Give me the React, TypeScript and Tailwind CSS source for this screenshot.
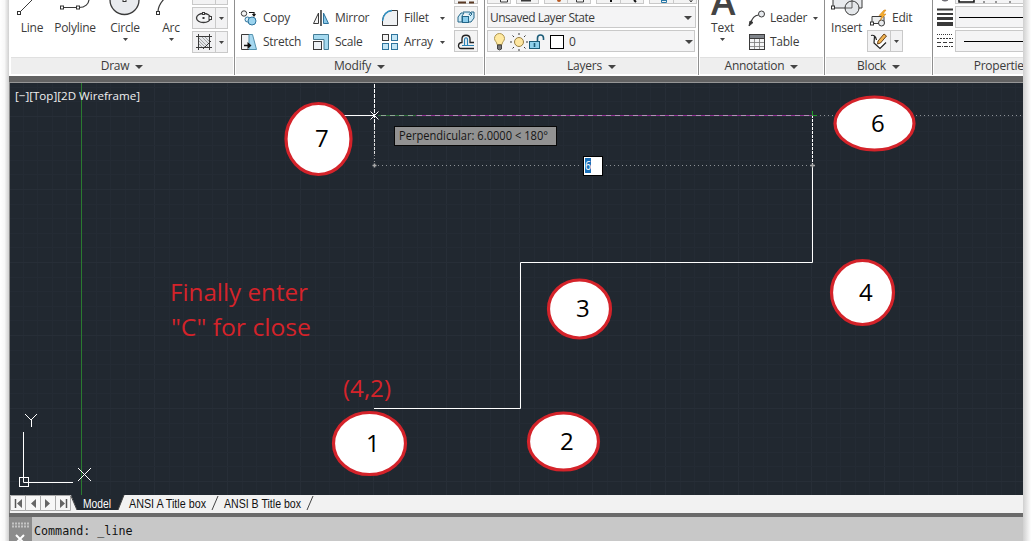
import React from "react";

type IconProps = { children?: React.ReactNode; w?: number; h?: number; className?: string };

function Icon({ children, w = 18, h = 18, className = "" }: IconProps) {
  return (
    <svg width={w} height={h} viewBox={`0 0 ${w} ${h}`} fill="none" stroke="#3a3a3a" strokeWidth="1" className={`block shrink-0 ${className}`}>
      {children}
    </svg>
  );
}

function Caret({ className = "" }: { className?: string }) {
  return (
    <svg width="5" height="3" viewBox="0 0 5 3" className={`block shrink-0 ${className}`}>
      <path d="M0 0h5L2.5 3z" fill="#444" />
    </svg>
  );
}

function BigCaret({ className = "" }: { className?: string }) {
  return (
    <svg width="8" height="4" viewBox="0 0 8 4" className={`block shrink-0 ${className}`}>
      <path d="M0 0h8L4 4z" fill="#444" />
    </svg>
  );
}

function Panel({ title, width, children, caret = true }: { title: string; width: string; children: React.ReactNode; caret?: boolean }) {
  return (
    <section className={`flex h-[75px] shrink-0 flex-col border-r border-[#8f8f8f] px-px ${width}`}>
      <div className="flex h-[57px] w-full overflow-hidden">{children}</div>
      <div className="flex h-[17px] items-center justify-center gap-[6px] border-t border-[#e0e0e0] bg-[#eeeeee] text-[12px] whitespace-nowrap">
        <span>{title}</span>
        {caret && <BigCaret className="mt-px" />}
      </div>
    </section>
  );
}

function Big({ icon, label, width, caret }: { icon: React.ReactNode; label: string; width: string; caret?: boolean }) {
  return (
    <div className={`flex shrink-0 flex-col items-center ${width}`}>
      <div className="flex h-[19px] items-start">{icon}</div>
      <span className="h-[18px] text-[12px] leading-[18px]">{label}</span>
      {caret && <Caret className="mt-px" />}
    </div>
  );
}

function Small({ icon, label, width, caret, labelGap = "ml-[5px]", caretGap = "mr-[9px]" }: { icon: React.ReactNode; label: string; width: string; caret?: boolean; labelGap?: string; caretGap?: string }) {
  return (
    <div className={`flex h-6 shrink-0 items-center ${width}`}>
      {icon}
      <span className={`grow text-[12px] whitespace-nowrap ${labelGap}`}>{label}</span>
      {caret && <Caret className={caretGap} />}
    </div>
  );
}

function Split({ icon }: { icon: React.ReactNode }) {
  return (
    <div className="flex h-[22px] w-9 border border-[#c9c9c9] bg-[#f2f2f3]">
      <div className="flex w-[23px] items-center justify-center border-r border-[#c9c9c9]">{icon}</div>
      <div className="flex grow items-center justify-center">
        <Caret />
      </div>
    </div>
  );
}

const Sq = ({ x, y }: { x: number; y: number }) => <rect x={x} y={y} width="3" height="3" fill="#fff" stroke="#333" />;

function Ribbon() {
  return (
    <header className="flex h-[76px] overflow-hidden bg-white pl-px text-[#3b3b3b]">
      <Panel title="Draw" width="w-[225px]">
        <div className="flex pl-[1px]">
          <Big width="w-10" label="Line" icon={<Icon w={40} h={19}><path d="M8 12L22-2" /><Sq x={5.5} y={11.5} /></Icon>} />
          <Big width="w-[46px]" label="Polyline" icon={<Icon w={46} h={19}><path d="M9 7.5H27C33 7.5 37 4 37-1" strokeWidth="1.2" /><Sq x={8.5} y={6} /><Sq x={24.5} y={6} /></Icon>} />
          <Big width="w-[54px]" label="Circle" caret icon={<Icon w={54} h={19}><circle cx="26.500" cy="0" r="14.500" fill="#e9ebee" strokeWidth="1.300" /><Sq x={25} y={-1.5} /></Icon>} />
          <Big width="w-[38px]" label="Arc" caret icon={<Icon w={38} h={19}><path d="M6 12C6 7 9 2 13-2" strokeWidth="1.200" /><Sq x={4.5} y={11.5} /></Icon>} />
        </div>
        <div className="-mt-[17px] flex flex-col gap-[2px] pl-[2px]">
          <Split icon={<Icon />} />
          <Split icon={<Icon><ellipse cx="8.500" cy="9" rx="7" ry="4.500" strokeWidth="1.300" fill="#f4f5f6" /><rect x="7.500" y="8" width="2" height="2" fill="#333" stroke="none" /><rect x="14" y="7.500" width="2.500" height="3" fill="#fff" /><rect x="7.500" y="3.500" width="2" height="2" fill="#fff" /></Icon>} />
          <Split icon={<Icon><rect x="3.500" y="3.500" width="11" height="11" fill="#e4e7ea" stroke="none" /><path d="M4 5l9 9M4 8l6 6M4 11l3 3M7 4l7 7M10 4l4 4" stroke="#888" strokeWidth=".7" /><path d="M1 3.500H17M1 14.500H17M3.500 1V17M14.500 1V17M8 16l8-8" /></Icon>} />
        </div>
      </Panel>

      <Panel title="Modify" width="w-[250px]">
        <div className="mt-[6px] flex pl-[4px]">
          <div className="w-[72px]">
            <Small width="w-full" label="Copy" icon={<Icon><circle cx="4" cy="4.500" r="2.700" fill="#f4f4f4" /><path d="M9 3.500h5v3M12.500 5l1.500 2 1.500-2" strokeWidth="1.200" stroke="#111" /><circle cx="7.500" cy="10.500" r="2.500" fill="#d8edf8" stroke="#2d739c" /><circle cx="12" cy="12" r="4" fill="#9bd3ee" stroke="#2d739c" /></Icon>} />
            <Small width="w-full" label="Stretch" icon={<Icon><path d="M9 1.500H1.500V16.500H9" fill="#f1f3f5" /><path d="M9 1.500H12.500L16.500 16.500H9z" fill="#a6d8f0" stroke="#5391ad" /><path d="M4 12.500h5" stroke="#111" strokeWidth="1.500" /><path d="M7.500 9l4 3.500-4 3.500z" fill="#111" stroke="none" /></Icon>} />
          </div>
          <div className="w-[69px]">
            <Small width="w-full" label="Mirror" icon={<Icon><path d="M6.500 4V14.500H1.500z" fill="#f4f4f4" /><path d="M11.500 4V14.500H16.500z" fill="#8ac8e8" stroke="#2d739c" /><path d="M9 1V17" stroke="#111" strokeWidth="1.300" /></Icon>} />
            <Small width="w-full" label="Scale" icon={<Icon><path d="M1.500 5V1.500H16.500V16.500H12V6.500H1.500z" fill="#a6daf0" stroke="#447c96" /><rect x="1.500" y="8.500" width="8" height="8" fill="#edf1f5" /></Icon>} />
          </div>
          <div className="w-[73px]">
            <Small width="w-full" caret label="Fillet" icon={<Icon><path d="M1.500 16.500V11Q2.500 2.500 11 1.500H16.500V16.500z" fill="#eff1f3" /><path d="M1.500 12Q2.500 2.500 11 1.500" stroke="#3291c3" strokeWidth="1.400" /></Icon>} />
            <Small width="w-full" caret label="Array" icon={<Icon><rect x="1.500" y="1.500" width="6" height="6" fill="#f1f1f1" /><rect x="10.500" y="1.500" width="6" height="6" fill="#c3e6f6" stroke="#2d739c" /><rect x="1.500" y="10.500" width="6" height="6" fill="#c3e6f6" stroke="#2d739c" /><rect x="10.500" y="10.500" width="6" height="6" fill="#c3e6f6" stroke="#2d739c" /></Icon>} />
          </div>
        </div>
        <div className="-mt-[18px] flex flex-col gap-[2px]">
          <div className="h-[22px] w-6 border border-[#c9c9c9] bg-[#f4f4f4]"><Icon w={22} h={22}><path d="M3 19.500h8M14 19.500h5" stroke="#5b3a24" strokeWidth="2" /></Icon></div>
          <div className="h-[22px] w-6 border border-[#c9c9c9] bg-[#f4f4f4]"><Icon w={22} h={22}><path d="M3 10l3-4h3L7 9v6H3zM8 5h7l2 2-2 2M14 8l2-3h3v6l-3 4h-2" fill="#cdeaf7" stroke="#246789" /><rect x="7.500" y="9.500" width="6" height="6" fill="#8bcdec" stroke="#246789" /></Icon></div>
          <div className="h-[22px] w-6 border border-[#c9c9c9] bg-[#f4f4f4]"><Icon w={22} h={22}><path d="M19 17.500H6C2.500 17.500 2.500 11.500 7 11.500V8C7 3 15 3 15 8v3.500h4" stroke="#222" strokeWidth="1.300" /><path d="M19 14.500H7M9.500 14.500V9C9.500 6 12.500 6 12.500 9v5.500" stroke="#2a83b6" strokeWidth="1.200" /></Icon></div>
        </div>
      </Panel>

      <Panel title="Layers" width="w-[214px]">
        <div className="flex w-full flex-col gap-[2px] pl-px">
          <div className="-mt-[19px] flex h-[23px] shrink-0 gap-[5px]">
            <div className="w-[24px] border border-[#c9c9c9] bg-[#f3f3f3]"><Icon w={22} h={22}><path d="M12.500 17v3h7v-3" /></Icon></div>
            <div className="w-[23px] border border-[#c9c9c9] bg-[#f3f3f3]"><Icon w={22} h={22}><path d="M4 18.500h10" strokeWidth="2" /></Icon></div>
            <div className="w-[47px] border border-[#c9c9c9] bg-[#f3f3f3]"><Icon w={45} h={22}><path d="M22.500 0v22" stroke="#c9c9c9" /><circle cx="14" cy="18" r="2" fill="#b95a23" stroke="none" /><path d="M31.500 16v4h7v-4" /></Icon></div>
            <div className="w-[48px] border border-[#c9c9c9] bg-[#f3f3f3]"><Icon w={46} h={22}><path d="M23.500 0v22" stroke="#c9c9c9" /><path d="M14 17v3M37 18l2 2" stroke="#111" strokeWidth="2" /></Icon></div>
            <div className="w-[48px] border border-[#c9c9c9] bg-[#f3f3f3]"><Icon w={46} h={22}><path d="M23.500 0v22" stroke="#c9c9c9" /><path d="M11.500 16v4.500h5V16M11 18.500h6" stroke="#2a79a7" /><path d="M39 17l2 3 2-3" /></Icon></div>
          </div>
          <div className="flex h-[22px] w-[209px] shrink-0 items-center justify-between border border-[#c9c9c9] bg-[#f4f4f5] pt-px pr-[3px] pl-[2px] text-[12px] tracking-[-0.5px]">
            <span className="whitespace-nowrap">Unsaved Layer State</span>
            <BigCaret />
          </div>
          <div className="flex h-[22px] w-[208px] shrink-0 items-center border border-[#c9c9c9] bg-[#f4f4f5] pt-px pl-[3px] text-[12px]">
            <Icon w={18} h={20}><path d="M6 12.500C6 10 3.500 9 3.500 6.500a5 5 0 0 1 10 0C13.500 9 11 10 11 12.500z" fill="#ffe9a0" stroke="#ad9550" /><path d="M6.500 13h4v4l-2 1-2-1z" fill="#777" stroke="#444" /></Icon>
            <Icon w={18} h={20} className="ml-px"><path d="M9 3V1M9 17v2M2 10H0M16 10h2M4 5L2.500 3.500M14 5l1.500-1.500M4 15l-1.500 1.500M14 15l1.500 1.500" /><circle cx="9" cy="10" r="4.500" fill="#ffe7a0" stroke="#987f43" /></Icon>
            <Icon w={18} h={20}><rect x="1.500" y="9.500" width="10" height="7" fill="#8ed0ec" stroke="#1c5c78" /><path d="M9.500 9V6c0-4 6-4 6 0v2M6.500 11v4" stroke="#1c5c78" strokeWidth="1.600" /></Icon>
            <div className="ml-[4px] size-[14px] border border-black bg-white" />
            <span className="ml-[5px] grow">0</span>
            <BigCaret className="mr-px" />
          </div>
        </div>
      </Panel>

      <Panel title="Annotation" width="w-[126px]">
        <Big width="w-[45px]" label="Text" caret icon={<Icon w={30} h={19}><text x="15" y="15" textAnchor="middle" fontSize="37" fontWeight="600" fill="#444" stroke="none">A</text></Icon>} />
        <div className="mt-[6px] flex flex-col pl-[3px]">
          <Small width="w-[75px]" caret caretGap="mr-[5px]" labelGap="ml-[4px]" label="Leader" icon={<Icon><path d="M3 14C4 9 6 6.500 10.500 6" strokeWidth="1.200" /><path d="M1 17l1-5 3 1.500z" fill="#333" /><circle cx="13.500" cy="5" r="3" fill="#e7eaee" /></Icon>} />
          <Small width="w-[75px]" labelGap="ml-[4px]" label="Table" icon={<Icon><rect x="1.500" y="1.500" width="15" height="15" fill="#f3f4f5" /><path d="M2 3.500h14" stroke="#80848a" strokeWidth="3" /><path d="M2 9.500h14M2 13.500h14M6.500 6v10M11.500 6v10" stroke="#777" strokeWidth=".8" /><path d="M1.500 5.500h15" /></Icon>} />
        </div>
      </Panel>

      <Panel title="Block" width="w-[108px]">
        <Big width="w-[41px]" label="Insert" icon={<Icon w={36} h={19}><path d="M4 8V-2H33V8z" fill="#e8eaed" /><circle cx="23" cy="8" r="7" fill="#e4e7ea" /><path d="M23 0v8h-7" strokeWidth=".8" /><Sq x={2.5} y={6} /></Icon>} />
        <div className="mt-[6px] flex flex-col">
          <Small width="w-[64px]" label="Edit" icon={<Icon className="ml-[2px]"><path d="M3 14.500V7.500H15V14.500z" fill="#eceeef" /><circle cx="12.500" cy="14" r="3" fill="#e9ebed" /><Sq x={1.5} y={13} /><path d="M15 1L10 6.500h3l-2 5 6-6.500h-3l3-4z" fill="#f7ae2c" stroke="#ca7a12" strokeWidth=".5" /></Icon>} />
          <Split icon={<Icon><path d="M1 3.500C4 2.500 6 5 6.500 8M4.500 4.500L4 11l6 5.500 6-6" fill="#fff" strokeWidth="1.200" stroke="#222" /><path d="M8 9l6-7 2.500 2-6 7-3 1z" fill="#f1b451" stroke="#6a431b" /></Icon>} />
        </div>
      </Panel>

      <Panel title="Properties" width="w-[152px]" caret>
        <div className="-mt-[18px] flex flex-col gap-[2px] pl-[2px]">
          <div className="flex">
            <Icon w={19} h={22}><circle cx="9" cy="14" r="5" fill="#777090" stroke="#666" /></Icon>
            <div className="h-[22px] w-[90px] border border-[#c9c9c9] bg-[#f4f4f5]"><Icon w={80} h={20}><rect x="3" y="5" width="15" height="14" fill="#fff" stroke="#111" strokeWidth="1.500" /><path d="M28 18v2M40 18v2M54 18v2" /></Icon></div>
          </div>
          <div className="flex">
            <Icon w={19} h={22}><path d="M1 3.500h16M1 8h16" strokeWidth="1.800" /><path d="M1 12.500h16" strokeWidth="3" /><path d="M1 18h16" strokeWidth="4" /></Icon>
            <div className="flex h-[22px] w-[90px] items-center border border-[#c9c9c9] bg-[#f4f4f5] pl-[3px]"><div className="h-px w-full bg-black" /></div>
          </div>
          <div className="flex">
            <Icon w={19} h={22}><path d="M1 4.500h16" strokeDasharray="1 1" /><path d="M1 8.500h16" strokeDasharray="2 1" /><path d="M1 12.500h16" strokeDasharray="4 2" /><path d="M1 16.500h16" strokeDasharray="4 1 1 1" /></Icon>
            <div className="flex h-[22px] w-[90px] items-center border border-[#c9c9c9] bg-[#f4f4f5] pl-[8px]"><div className="h-px w-full bg-black" /></div>
          </div>
        </div>
      </Panel>
    </header>
  );
}

const balloons = [
  { n: "7", cx: 308.5, cy: 56, rx: 32.5, ry: 35.5, tx: 305, ty: 64 },
  { n: "6", cx: 864.5, cy: 40.5, rx: 39.5, ry: 26.5, tx: 861, ty: 49 },
  { n: "3", cx: 569.5, cy: 226, rx: 31, ry: 29, tx: 566, ty: 234 },
  { n: "4", cx: 852.5, cy: 209.5, rx: 31, ry: 32, tx: 849, ty: 218 },
  { n: "1", cx: 359.5, cy: 360.5, rx: 36, ry: 31, tx: 356, ty: 369 },
  { n: "2", cx: 553.5, cy: 358.5, rx: 35, ry: 28.5, tx: 550, ty: 367 },
];

const columns = Array.from({ length: 70 }, (_, i) => ({ at: Math.round(71 + (i - 4) * 14.6) + 0.5, major: (i - 4) % 5 === 0 }));
const rows = Array.from({ length: 29 }, (_, i) => ({ at: Math.round(325 + (i - 22) * 14.6) + 0.5, major: (i - 22) % 5 === 0 }));

function Drawing() {
  return (
    <svg width="1013" height="412" viewBox="0 0 1013 412" className="block bg-[#212830] font-['Open_Sans',sans-serif] tracking-[0]" fill="none">
      {columns.map((c) => <path key={`c${c.at}`} d={`M${c.at} 0V412`} stroke={c.major ? "#272e37" : "#242b34"} />)}
      {rows.map((r) => <path key={`r${r.at}`} d={`M0 ${r.at}H1013`} stroke={r.major ? "#272e37" : "#242b34"} />)}
      <path d="M71.500 0V412" stroke="#2a7a30" />
      <text x="5" y="17" fontSize="11.500" fill="#f0f0f0" textLength="125" lengthAdjust="spacingAndGlyphs">[−][Top][2D Wireframe]</text>

      <path d="M364 325.500H510.500V179.500H802.500V83" stroke="#fff" />
      <path d="M802.500 83V33" stroke="#fff" strokeDasharray="3 1" />
      <path d="M330 32.500H364" stroke="#fff" strokeWidth="1.200" />
      <path d="M364.500 1V44" stroke="#fff" strokeDasharray="4 1" />
      <path d="M364.500 44V72" stroke="#ddd" strokeDasharray="3 1" />
      <path d="M364.500 72V83" stroke="#999" strokeDasharray="1 2" />
      <path d="M368 32.500H406" stroke="#2e6d39" />
      <path d="M406 32.500H802" stroke="#8f2f90" />
      <path d="M371 32.500H406" stroke="#8fa894" strokeDasharray="5 4" />
      <path d="M407 32.500H802" stroke="#b391b6" strokeDasharray="5 4" />
      <path d="M802 32.500H1013M364 82.500H802" stroke="#8c9196" strokeDasharray="1 3" />
      <path d="M360.500 28.500l8 8m0-8l-8 8" stroke="#fff" />
      <path d="M802.500 28V32.500H807" stroke="#20992a" />
      <path d="M362.500 82.500h4m-2-2v4M800 82.500h5m-2.500-2v4" stroke="#aaa" strokeWidth="1.500" />

      <rect x="384.500" y="43.500" width="162" height="19" fill="#929292" stroke="#080808" />
      <text x="389" y="57" fontSize="12" fill="#151515" textLength="149" lengthAdjust="spacingAndGlyphs">Perpendicular: 6.0000 &lt; 180°</text>
      <rect x="571" y="72" width="24" height="22" fill="#212830" />
      <rect x="573.500" y="73.500" width="19" height="19" fill="#fff" stroke="#000" />
      <rect x="575" y="75" width="6" height="15" fill="#1a70b8" />
      <text x="575" y="87" fontSize="12" fill="#fff" textLength="6" lengthAdjust="spacingAndGlyphs">6</text>

      {balloons.map((b) => (
        <g key={b.n}>
          <ellipse cx={b.cx} cy={b.cy} rx={b.rx} ry={b.ry} fill="#fff" stroke="#d4232a" strokeWidth="3.200" />
          <text x={b.tx} y={b.ty} fontSize="24" fill="#000">{b.n}</text>
        </g>
      ))}
      <g fill="#d4232a" fontSize="24">
        <text x="160" y="218" textLength="138" lengthAdjust="spacingAndGlyphs">Finally enter</text>
        <text x="161" y="253" textLength="140" lengthAdjust="spacingAndGlyphs">"C" for close</text>
        <text x="333" y="314" textLength="48" lengthAdjust="spacingAndGlyphs">(4,2)</text>
      </g>

      <g stroke="#fff">
        <path d="M13.500 349V399.500H63" />
        <rect x="9.500" y="394.500" width="9" height="9" />
        <path d="M15 331l6 6 6-6M21.500 337v7M68 385l13 13m0-13l-13 13" />
      </g>
    </svg>
  );
}

function Tabs() {
  return (
    <nav className="flex h-[18px] bg-[#f2f2f2]">
      <svg width="1013" height="18" viewBox="0 0 1013 18" fontFamily="Liberation Sans, sans-serif" fontSize="12" className="block tracking-[0]">
        <g fill="#f7f7f7" stroke="#aaa">
          <path d="M.5.500H15.500V15.500H.5zM15.500.500H30.500V15.500H15.500zM30.500.500H45.500V15.500H30.500zM45.500.500H60.500V15.500H45.500z" />
        </g>
        <path d="M5.500 4v9M56.500 4v9" stroke="#555" strokeWidth="1.500" />
        <path d="M12 4v9L7 8.500zM26 4v9l-5-4.500zM35 4v9l5-4.500zM50 4v9l5-4.500z" fill="#666" />
        <path d="M61 0H114L108 15H67z" fill="#212830" />
        <path d="M61 1l6 14M108 15l6-15M202 15l6-14M297 15l6-14" fill="none" stroke="#444" />
        <text x="73" y="13" fill="#fff" textLength="28" lengthAdjust="spacingAndGlyphs">Model</text>
        <text x="119" y="13" fill="#111" textLength="77" lengthAdjust="spacingAndGlyphs">ANSI A Title box</text>
        <text x="214" y="13" fill="#111" textLength="77" lengthAdjust="spacingAndGlyphs">ANSI B Title box</text>
      </svg>
    </nav>
  );
}

export default function App() {
  return (
    <main className="flex h-[541px] w-[1031px] overflow-hidden bg-white font-['Open_Sans',sans-serif] text-[12px] tracking-[-0.25px]">
      <div className="w-[9px] shrink-0 bg-linear-to-r from-white via-[#f8f8f8] to-[#d0d0d0]" />
      <div className="flex w-[1014px] shrink-0 flex-col overflow-hidden">
        <Ribbon />
        <div className="h-[7px] shrink-0 border-b border-[#969696] bg-[#626262]" />
        <div className="shrink-0 border-l border-[#888]">
          <Drawing />
          <Tabs />
        </div>
        <div className="h-[4px] shrink-0 bg-[#6a6a6a]" />
        <footer className="flex h-6 shrink-0 bg-[#c8c8c8]">
          <svg width="23" height="24" viewBox="0 0 23 24" className="block bg-[#8c8c8c]">
            <path d="M3 6.500h17M3 9.500h17" stroke="#c4c4c4" strokeWidth="2" strokeDasharray="2 1" />
            <path d="M7 18l8 8m0-8l-8 8" stroke="#fff" strokeWidth="2" />
          </svg>
          <span className="pt-[6px] pl-[2px] font-['DejaVu_Sans_Mono',monospace] text-[11.700px] leading-4 tracking-[0] text-[#111]">Command: _line</span>
        </footer>
      </div>
      <div className="w-2 shrink-0 bg-linear-to-r from-[#d0d0d0] to-white" />
    </main>
  );
}
